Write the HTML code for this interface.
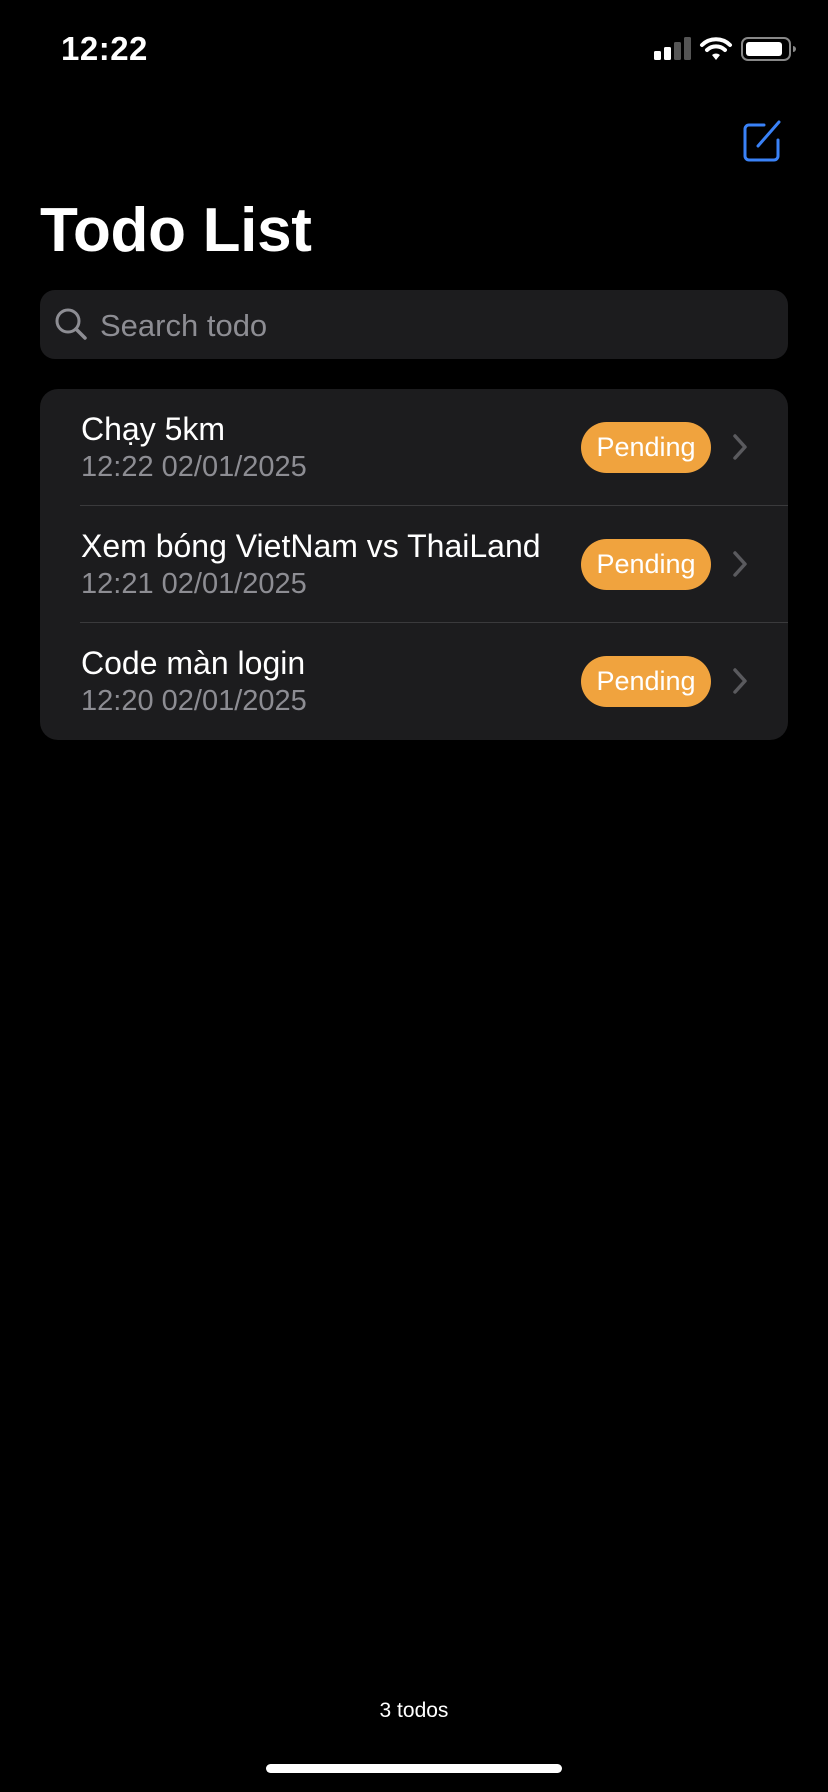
<!DOCTYPE html>
<html><head><meta charset="utf-8"><style>
*{margin:0;padding:0;box-sizing:border-box}
body{width:828px;height:1792px;background:#000;position:relative;overflow:hidden;font-family:"Liberation Sans",sans-serif;color:#fff}
.abs{position:absolute}
.row{position:absolute;left:0;right:0;height:117px}
.t{position:absolute;left:41px;top:22px;font-size:32px;color:#fff;white-space:nowrap}
.d{position:absolute;left:41px;top:62px;font-size:29px;color:#8d8d93;white-space:nowrap}
.b{position:absolute;left:541px;top:33px;width:130px;height:51px;border-radius:26px;background:#F0A33E;color:#fff;font-size:27px;text-align:center;line-height:51px}
.c{position:absolute;left:692px;top:44px}
.sep{position:absolute;left:40px;right:0;bottom:0;height:1px;background:#3a3a3c}
</style></head><body>
<div class="abs" style="left:61px;top:30px;font-size:33px;font-weight:bold;letter-spacing:0.5px">12:22</div>
<svg class="abs" style="left:652px;top:36px" width="145" height="28" viewBox="0 0 145 28">
<rect x="2" y="15" width="7" height="9" rx="1.5" fill="#fff"/>
<rect x="12" y="11" width="7" height="13" rx="1.5" fill="#fff"/>
<rect x="22" y="6" width="7" height="18" rx="1.5" fill="#555"/>
<rect x="32" y="1" width="7" height="23" rx="1.5" fill="#555"/>
<path d="M50 9 A20 20 0 0 1 78 9" stroke="#fff" stroke-width="4" fill="none" stroke-linecap="round"/>
<path d="M55 14 A13 13 0 0 1 73 14" stroke="#fff" stroke-width="4" fill="none" stroke-linecap="round"/>
<path d="M60 19 L64 24 L68 19 A6 6 0 0 0 60 19Z" fill="#fff"/>
<rect x="90" y="2" width="48" height="22" rx="6" stroke="#888" stroke-width="2" fill="none"/>
<rect x="94" y="6" width="36" height="14" rx="3" fill="#fff"/>
<path d="M141 10 v6 a3 3 0 0 0 0 -6z" fill="#888"/>
</svg>
<svg class="abs" style="left:740px;top:118px" width="46" height="46" viewBox="0 0 46 46">
<path d="M24 7 H9 a4 4 0 0 0 -4 4 V38 a4 4 0 0 0 4 4 H34 a4 4 0 0 0 4 -4 V22" stroke="#3a82f7" stroke-width="3" fill="none" stroke-linecap="round"/>
<path d="M18 28 L39 4" stroke="#3a82f7" stroke-width="3" stroke-linecap="round"/>
</svg>
<div class="abs" style="left:40px;top:195px;font-size:62px;font-weight:bold;letter-spacing:-0.3px">Todo List</div>
<div class="abs" style="left:40px;top:290px;width:748px;height:69px;border-radius:15px;background:#1c1c1e">
<svg class="abs" style="left:14px;top:17px" width="36" height="36" viewBox="0 0 36 36"><circle cx="14" cy="14" r="11" stroke="#8d8d93" stroke-width="3" fill="none"/><path d="M22 22 L31 31" stroke="#8d8d93" stroke-width="3.5" stroke-linecap="round"/></svg>
<div class="abs" style="left:60px;top:18px;font-size:31px;color:#8d8d93">Search todo</div>
</div>
<div class="abs" style="left:40px;top:389px;width:748px;height:351px;border-radius:18px;background:#1c1c1e;overflow:hidden">
<div class="row" style="top:0"><div class="t">Chạy 5km</div><div class="d">12:22 02/01/2025</div><div class="b">Pending</div>
<svg class="c" width="16" height="28" viewBox="0 0 16 28"><path d="M3 3 L13 14 L3 25" stroke="#5a5a5e" stroke-width="3.5" fill="none" stroke-linecap="round" stroke-linejoin="round"/></svg><div class="sep"></div></div>
<div class="row" style="top:117px"><div class="t">Xem bóng VietNam vs ThaiLand</div><div class="d">12:21 02/01/2025</div><div class="b">Pending</div>
<svg class="c" width="16" height="28" viewBox="0 0 16 28"><path d="M3 3 L13 14 L3 25" stroke="#5a5a5e" stroke-width="3.5" fill="none" stroke-linecap="round" stroke-linejoin="round"/></svg><div class="sep"></div></div>
<div class="row" style="top:234px"><div class="t">Code màn login</div><div class="d">12:20 02/01/2025</div><div class="b">Pending</div>
<svg class="c" width="16" height="28" viewBox="0 0 16 28"><path d="M3 3 L13 14 L3 25" stroke="#5a5a5e" stroke-width="3.5" fill="none" stroke-linecap="round" stroke-linejoin="round"/></svg></div>
</div>
<div class="abs" style="left:0;width:828px;top:1699px;text-align:center;font-size:21px">3 todos</div>
<div class="abs" style="left:266px;top:1764px;width:296px;height:9px;border-radius:5px;background:#fff"></div>
</body></html>
